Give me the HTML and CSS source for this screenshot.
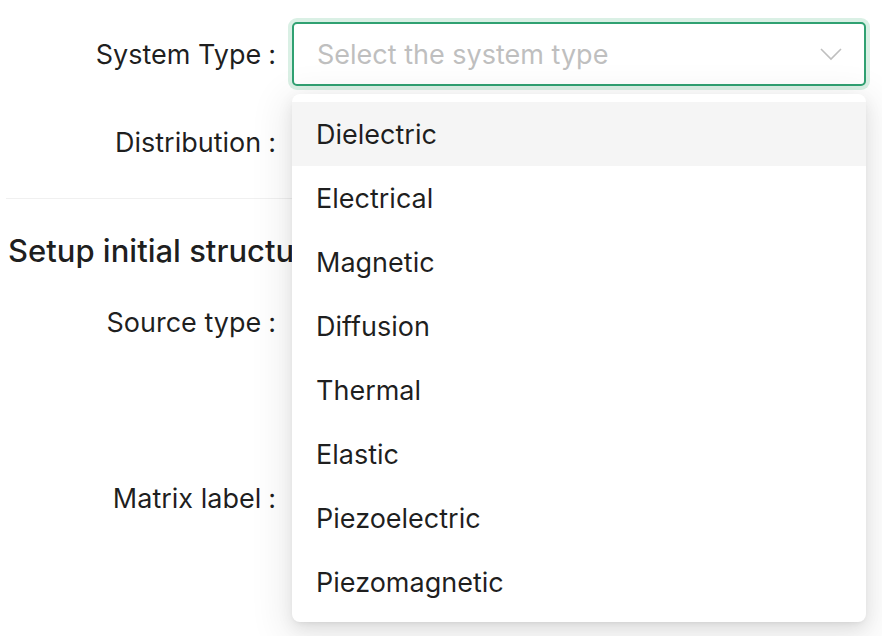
FILE: index.html
```html
<!DOCTYPE html>
<html>
<head>
<meta charset="utf-8">
<link rel="stylesheet" href="styles.css">
</head>
<body>
<div class="page">
  <form class="form">
    <div class="row">
      <div class="label"><span>System Type</span><span class="colon">:</span></div>
      <div class="control">
        <div class="select">
          <span class="placeholder">Select the system type</span>
          <svg class="arrow" width="22" height="14" viewBox="0 0 22 14"><path d="M1 2 L11 12 L21 2" fill="none" stroke="#bfbfbf" stroke-width="1.6"/></svg>
        </div>
      </div>
    </div>
    <div class="row">
      <div class="label"><span>Distribution</span><span class="colon">:</span></div>
      <div class="control"></div>
    </div>
    <div class="divider"></div>
    <h2 class="heading">Setup initial structure</h2>
    <div class="row">
      <div class="label"><span>Source type</span><span class="colon">:</span></div>
      <div class="control"></div>
    </div>
    <div class="row tall">
      <div class="label"><span>Matrix label</span><span class="colon">:</span></div>
      <div class="control"></div>
    </div>
  </form>
  <div class="dropdown">
    <div class="option active">Dielectric</div>
    <div class="option">Electrical</div>
    <div class="option">Magnetic</div>
    <div class="option">Diffusion</div>
    <div class="option">Thermal</div>
    <div class="option">Elastic</div>
    <div class="option">Piezoelectric</div>
    <div class="option">Piezomagnetic</div>
  </div>
</div>
</body>
</html>
```
FILE: styles.css
```css
* { box-sizing: border-box; }
html, body { margin: 0; padding: 0; background: #fff; }
body {
  font-family: Inter, "Open Sans", sans-serif;
  font-size: 27px;
  color: rgba(0,0,0,0.88);
  overflow: hidden;
}
.page {
  position: relative;
  width: 882px;
  height: 636px;
  padding: 22px 16px 0 6px;
}
.form { display: flex; flex-direction: column; }
.row {
  display: flex;
  align-items: center;
  height: 64px;
  margin-bottom: 24px;
  padding-top: 1px;
}
.label {
  width: 286px;
  flex: none;
  text-align: right;
  padding-right: 16px;
  white-space: nowrap;
}
.colon { margin-left: 7px; }
.control { flex: 1; }
.select {
  height: 64px;
  border: 2px solid #30a172;
  border-radius: 5px;
  box-shadow: 0 0 0 4px #daf0e5;
  display: flex;
  align-items: center;
  justify-content: space-between;
  padding: 0 22px 0 23px;
  background: #fff;
}
.row:first-child { padding-top: 0; }
.placeholder { color: #bfbfbf; }
.divider { height: 1px; background: #f0f0f0; margin: 0 0 32px 0; }
.heading {
  margin: 0 0 19px 2px;
  font-size: 31px;
  font-weight: 500;
  line-height: 40px;
  white-space: nowrap;
}
.tall { margin-top: 88px; }
.dropdown {
  position: absolute;
  left: 292px;
  top: 94px;
  width: 574px;
  padding: 8px 0;
  background: #fff;
  border-radius: 8px;
  box-shadow: 0 6px 16px rgba(0,0,0,0.08), 0 3px 6px -4px rgba(0,0,0,0.12), 0 9px 36px 10px rgba(0,0,0,0.07);
}
.option {
  height: 64px;
  line-height: 62px;
  padding: 2px 24px 0;
}
.option.active { background: #f5f5f5; }
```
